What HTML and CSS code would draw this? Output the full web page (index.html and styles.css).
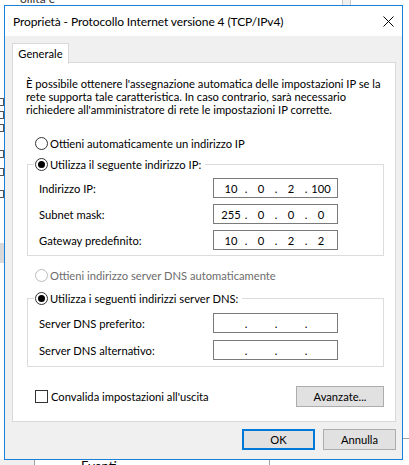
FILE: index.html
```html
<!DOCTYPE html>
<html lang="it">
<head>
<meta charset="utf-8">
<title>Proprietà - Protocollo Internet versione 4 (TCP/IPv4)</title>
<link rel="stylesheet" href="styles.css">
</head>
<body>
<div class="desktop">
  <div class="bg-top-text">ollità e</div>
  <div class="bg-scroll"></div>
  <div class="bg-left">
    <span class="bg-mark m1"></span>
    <span class="bg-mark m2"></span>
    <span class="bg-mark m3"></span>
    <span class="bg-mark m4"></span>
    <span class="bg-mark m5"></span>
    <span class="bg-mark m6"></span>
    <span class="bg-gray"></span>
  </div>
  <div class="bg-bottom">
    <div class="bg-col c1"></div>
    <div class="bg-col c2"><span class="bg-eventi">Eventi</span></div>
    <div class="bg-col c3"></div>
  </div>
  <div class="bg-right-line"></div>

  <div class="dialog">
    <div class="titlebar">
      <span class="title">Proprietà - Protocollo Internet versione 4 (TCP/IPv4)</span>
      <span class="close">
        <svg width="11" height="11" viewBox="0 0 11 11"><path d="M0.5 0.5 L10.5 10.5 M10.5 0.5 L0.5 10.5" stroke="#000" stroke-width="1" fill="none"/></svg>
      </span>
    </div>
    <div class="body">
      <div class="tabs"><div class="tab">Generale</div></div>
      <div class="panel">
        <p class="desc">È possibile ottenere l'assegnazione automatica delle impostazioni IP se la<br>rete supporta tale caratteristica. In caso contrario, sarà necessario<br>richiedere all'amministratore di rete le impostazioni IP corrette.</p>

        <div class="opt first"><span class="radio"></span><span>Ottieni automaticamente un indirizzo IP</span></div>

        <fieldset class="group g1">
          <legend class="opt"><span class="radio on"></span><span>Utilizza il seguente indirizzo IP:</span></legend>
          <div class="field"><span>Indirizzo IP:</span><span class="ip"><b>10</b><i>.</i><b>0</b><i>.</i><b>2</b><i>.</i><b>100</b></span></div>
          <div class="field"><span>Subnet mask:</span><span class="ip"><b>255</b><i>.</i><b>0</b><i>.</i><b>0</b><i>.</i><b>0</b></span></div>
          <div class="field"><span>Gateway predefinito:</span><span class="ip"><b>10</b><i>.</i><b>0</b><i>.</i><b>2</b><i>.</i><b>2</b></span></div>
        </fieldset>

        <div class="opt dns-auto disabled"><span class="radio"></span><span>Ottieni indirizzo server DNS automaticamente</span></div>

        <fieldset class="group g2">
          <legend class="opt"><span class="radio on"></span><span>Utilizza i seguenti indirizzi server DNS:</span></legend>
          <div class="field"><span>Server DNS preferito:</span><span class="ip"><b></b><i>.</i><b></b><i>.</i><b></b><i>.</i><b></b></span></div>
          <div class="field f2"><span>Server DNS alternativo:</span><span class="ip"><b></b><i>.</i><b></b><i>.</i><b></b><i>.</i><b></b></span></div>
        </fieldset>

        <div class="bottom-row">
          <div class="check-opt"><span class="check"></span><span>Convalida impostazioni all'uscita</span></div>
          <button class="btn adv">Avanzate...</button>
        </div>
      </div>
      <div class="actions">
        <button class="btn default">OK</button>
        <button class="btn">Annulla</button>
      </div>
    </div>
  </div>
</div>
</body>
</html>
```
FILE: styles.css
```css
* { box-sizing: border-box; }
html, body { margin: 0; padding: 0; }
body {
  width: 409px;
  height: 465px;
  overflow: hidden;
  background: #fff;
  font-family: "Lato", "Liberation Sans", sans-serif;
  font-size: 11.2px;
  color: #000;
}
.desktop { position: relative; width: 409px; height: 465px; overflow: hidden; }

/* background fragments of the desktop window behind */
.bg-top-text { position: absolute; left: 20px; top: -9px; font-size: 12px; color: #333; }
.bg-scroll { position: absolute; left: 342px; top: 0; width: 9px; height: 6px; background: #f0f0f0; border-left: 1px solid #c8c8c8; border-right: 1px solid #c8c8c8; }
.bg-left { position: absolute; left: 0; top: 0; width: 4px; height: 465px; }
.bg-mark { position: absolute; left: 0; width: 4px; height: 8px; border: 1px solid #555; border-left: none; }
.m1 { top: 98px; } .m2 { top: 111px; } .m3 { top: 124px; } .m4 { top: 150px; } .m5 { top: 168px; } .m6 { top: 190px; }
.bg-gray { position: absolute; left: 0; top: 243px; width: 4px; height: 20px; background: #d9d9d9; }
.bg-bottom { position: absolute; left: 0; top: 459px; width: 409px; height: 6px; display: flex; background: #f0f0f0; }
.bg-col { height: 6px; }
.c1 { width: 35px; background: #f0f0f0; border-right: 1px solid #a0a0a0; }
.c2 { width: 235px; background: #fff; border-right: 1px solid #a0a0a0; position: relative; overflow: hidden; }
.c3 { flex: 1; background: #fff; }
.bg-eventi { position: absolute; left: 46px; top: -1px; font-size: 13px; color: #000; }
.bg-right-line { position: absolute; left: 402px; top: 438px; width: 7px; height: 1px; background: #a0a0a0; }

/* dialog window */
.dialog {
  position: absolute;
  left: 4px;
  top: 5px;
  width: 399px;
  height: 455px;
  border: 1px solid #1a7fd6;
  background: #f0f0f0;
  display: flex;
  flex-direction: column;
}
.titlebar {
  height: 30px;
  background: #fff;
  display: flex;
  align-items: center;
  justify-content: space-between;
  padding-left: 8px;
  flex: none;
}
.title { font-size: 12px; letter-spacing: -0.1px; white-space: nowrap; }
.close { width: 28px; display: flex; justify-content: center; align-items: center; }
.close svg { display: block; }

.body {
  flex: 1;
  padding: 7px 6px 0 7px;
  display: flex;
  flex-direction: column;
}
.tabs { display: flex; height: 20px; position: relative; z-index: 1; margin-bottom: -1px; }
.tab {
  width: 57px;
  height: 21px;
  background: #fff;
  border: 1px solid #d9d9d9;
  border-bottom: none;
  display: flex;
  align-items: center;
  justify-content: center;
  padding-bottom: 2px;
}
.panel {
  height: 360px;
  background: #fff;
  border: 1px solid #d9d9d9;
  padding: 14px 11px 0 13px;
  flex: none;
  white-space: nowrap;
}
.desc { margin: 0; line-height: 13px; }

.opt { display: flex; align-items: center; height: 15px; }
.opt .radio { margin-right: 2px; }
.first { margin-top: 20px; padding-left: 9px; }
.radio {
  width: 13px;
  height: 13px;
  border: 1px solid #333;
  border-radius: 50%;
  background: #fff;
  display: inline-flex;
  align-items: center;
  justify-content: center;
  flex: none;
}
.radio.on::after { content: ""; width: 7px; height: 7px; border-radius: 50%; background: #000; }
.disabled { color: #6d6d6d; }
.disabled .radio { border-color: #bcbcbc; }

.group {
  margin: 0 0 0 1px;
  border: 1px solid #dcdcdc;
  padding: 0 0 5px 11px;
  min-width: 0;
}
.group legend { padding: 0 4px 0 1px; margin-left: -5px; }
.g1 { margin-top: 6px; }
.dns-auto { margin-top: 12px; padding-left: 9px; }
.g2 { margin-top: 8px; padding-bottom: 6px; }
.field {
  display: grid;
  grid-template-columns: 174px 125px;
  align-items: center;
  height: 20px;
  margin-top: 6px;
}
.g2 .field { margin-top: 7px; }
.ip {
  height: 20px;
  border: 1px solid #7a7a7a;
  display: flex;
  align-items: center;
  padding-left: 4px;
  background: #fff;
}
.ip b { font-weight: normal; width: 26px; text-align: center; }
.ip i { font-style: normal; width: 4px; text-align: center; }

.bottom-row { display: flex; justify-content: space-between; align-items: center; margin-top: 19px; padding-left: 9px; }
.check-opt { display: flex; align-items: center; }
.check { width: 13px; height: 13px; border: 1px solid #333; margin-right: 3px; background: #fff; }
.btn {
  font-family: inherit;
  font-size: 11.2px;
  color: #000;
  background: #e1e1e1;
  border: 1px solid #adadad;
  padding: 0;
  margin: 0;
}
.adv { width: 88px; height: 21px; }
.actions { display: flex; justify-content: flex-end; gap: 8px; margin-top: 7px; }
.actions .btn { width: 73px; height: 21px; }
.btn.default { border: 2px solid #0078d7; }
```
